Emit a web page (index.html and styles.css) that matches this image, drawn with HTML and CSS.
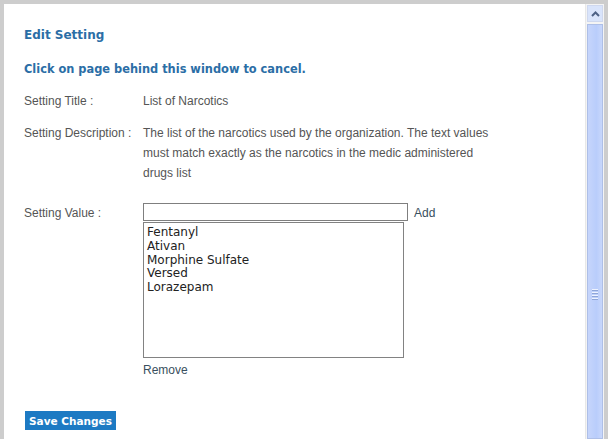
FILE: index.html
```html
<!DOCTYPE html>
<html>
<head>
<meta charset="utf-8">
<link rel="stylesheet" href="styles.css">
</head>
<body>
<div class="window">
  <div class="content">
    <h1 class="title">Edit Setting</h1>
    <h2 class="hint">Click on page behind this window to cancel.</h2>
    <div class="form">
      <div class="label row-title">Setting Title :</div>
      <div class="value row-title">List of Narcotics</div>
      <div class="label row-desc">Setting Description :</div>
      <div class="value row-desc desc">The list of the narcotics used by the organization. The text values must match exactly as the narcotics in the medic administered drugs list</div>
      <div class="label row-val">Setting Value :</div>
      <div class="value row-val">
        <div class="add-line">
          <input class="text-input" type="text">
          <a class="link add">Add</a>
        </div>
        <div class="listbox">
          <div>Fentanyl</div>
          <div>Ativan</div>
          <div>Morphine Sulfate</div>
          <div>Versed</div>
          <div>Lorazepam</div>
        </div>
        <a class="link remove">Remove</a>
      </div>
    </div>
    <button class="save">Save Changes</button>
  </div>
  <div class="scrollbar">
    <div class="sb-up">
      <svg width="9" height="6" viewBox="0 0 9 6"><path d="M1 5 L4.5 1.5 L8 5" fill="none" stroke="#4d6185" stroke-width="2"/></svg>
    </div>
    <div class="sb-thumb">
      <div class="grip"><span></span><span></span><span></span><span></span></div>
    </div>
  </div>
</div>
</body>
</html>
```
FILE: styles.css
```css
html, body {
  margin: 0;
  padding: 0;
  background: #cdcdcd;
  height: 439px;
  overflow: hidden;
}
.window {
  margin: 4px 4px 0 4px;
  height: 435px;
  background: #fff;
  display: flex;
}
.content {
  flex: 1;
  padding: 23px 0 0 20px;
  font-family: "Liberation Sans", Arial, sans-serif;
  font-size: 12px;
  color: #555;
}
.title, .hint {
  margin: 0;
  font-family: "DejaVu Sans", Verdana, sans-serif;
  font-weight: bold;
  font-size: 12px;
  color: #2b6ea6;
  line-height: 16px;
}
.hint { margin-top: 18px; font-size: 11.4px; }
.form {
  margin-top: 14px;
  display: grid;
  grid-template-columns: 119px 352px;
  row-gap: 12px;
  line-height: 20px;
}
.desc { margin-bottom: 8px; }
.add-line {
  display: flex;
  align-items: center;
  gap: 6px;
  height: 18px;
}
.add { margin-top: 2px; }
.text-input {
  box-sizing: border-box;
  width: 265px;
  height: 18px;
  margin: 0;
  border: 1px solid #7f7f7f;
  padding: 0;
  background: #fff;
}
.link { color: #394f5e; }
.listbox {
  box-sizing: border-box;
  width: 261px;
  height: 136px;
  margin-top: 1px;
  border: 1px solid #828282;
  padding: 3px 3px 2px;
  font-family: "DejaVu Sans", Tahoma, sans-serif;
  font-size: 12px;
  line-height: 13.8px;
  color: #222;
}
.remove { display: block; margin-top: 2px; line-height: 20px; }
.save {
  margin: 31px 0 0 1px;
  padding: 0 4px;
  height: 19px;
  border: 0;
  background: #1d7ac3;
  color: #fff;
  font-family: "DejaVu Sans", Verdana, sans-serif;
  font-weight: bold;
  font-size: 10.5px;
}
.scrollbar {
  width: 16px;
  margin-left: 1px;
  border-left: 1px solid #e8e8e8;
  background: #f4f4f4;
  display: flex;
  flex-direction: column;
  padding: 0 1px;
}
.sb-up {
  height: 15px;
  margin-top: 1px;
  border: 1px solid #cfd8ee;
  background: #d9e4fb;
  display: flex;
  align-items: center;
  justify-content: center;
}
.sb-thumb {
  flex: 1;
  margin-top: 2px;
  border: 1px solid #aebfe7;
  background: linear-gradient(to right, #c6d5fb, #b9cdfb 60%, #c8d7fb);
  display: flex;
  align-items: center;
  justify-content: center;
}
.grip { display: flex; flex-direction: column; gap: 1px; margin-top: 126px; }
.grip span { width: 6px; height: 1px; background: #eef3ff; border-bottom: 1px solid #8fa6d8; }
```
